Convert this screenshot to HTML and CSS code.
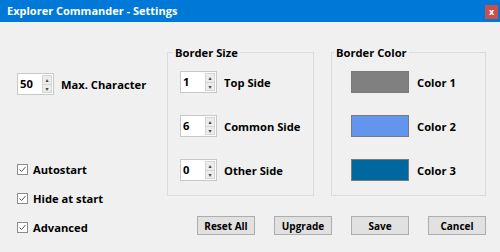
FILE: index.html
```html
<!DOCTYPE html>
<html lang="en">
<head>
    <meta charset="UTF-8">
    <meta name="viewport" content="width=device-width, initial-scale=1.0">
    <title>Explorer Commander - Settings</title>
    <link rel="stylesheet" href="styles.css">
</head>
<body>
<div class="window">
    <div class="title-bar">
        <span class="title-text">Explorer Commander - Settings</span>
        <span class="close-button">x</span>
    </div>

    <div class="content">
        <div class="left-column">
            <div class="row">
                <div class="spinbox">
                    <span class="spin-value">50</span>
                    <span class="spin-arrows"><span class="arrow">&#9652;</span><span class="arrow">&#9662;</span></span>
                </div>
                <span class="label">Max. Character</span>
            </div>

            <div class="checks">
                <label class="check"><span class="check-box"><svg width="11" height="11" viewBox="0 0 11 11"><rect x="0.5" y="0.5" width="10" height="10" fill="#fff" stroke="#8c8c8c"/><polyline points="2.5,5.5 4.5,7.5 8.5,3" fill="none" stroke="#555" stroke-width="1"/></svg></span>Autostart</label>
                <label class="check"><span class="check-box"><svg width="11" height="11" viewBox="0 0 11 11"><rect x="0.5" y="0.5" width="10" height="10" fill="#fff" stroke="#8c8c8c"/><polyline points="2.5,5.5 4.5,7.5 8.5,3" fill="none" stroke="#555" stroke-width="1"/></svg></span>Hide at start</label>
                <label class="check"><span class="check-box"><svg width="11" height="11" viewBox="0 0 11 11"><rect x="0.5" y="0.5" width="10" height="10" fill="#fff" stroke="#8c8c8c"/><polyline points="2.5,5.5 4.5,7.5 8.5,3" fill="none" stroke="#555" stroke-width="1"/></svg></span>Advanced</label>
            </div>
        </div>

        <div class="right-column">
            <div class="groups">
                <fieldset class="group group-size">
                    <legend>Border Size</legend>
                    <div class="row">
                        <div class="spinbox">
                            <span class="spin-value">1</span>
                            <span class="spin-arrows"><span class="arrow">&#9652;</span><span class="arrow">&#9662;</span></span>
                        </div>
                        <span class="label">Top Side</span>
                    </div>
                    <div class="row">
                        <div class="spinbox">
                            <span class="spin-value">6</span>
                            <span class="spin-arrows"><span class="arrow">&#9652;</span><span class="arrow">&#9662;</span></span>
                        </div>
                        <span class="label">Common Side</span>
                    </div>
                    <div class="row">
                        <div class="spinbox">
                            <span class="spin-value">0</span>
                            <span class="spin-arrows"><span class="arrow">&#9652;</span><span class="arrow">&#9662;</span></span>
                        </div>
                        <span class="label">Other Side</span>
                    </div>
                </fieldset>

                <fieldset class="group group-color">
                    <legend>Border Color</legend>
                    <div class="row">
                        <span class="swatch swatch-gray"></span>
                        <span class="label">Color 1</span>
                    </div>
                    <div class="row">
                        <span class="swatch swatch-blue"></span>
                        <span class="label">Color 2</span>
                    </div>
                    <div class="row">
                        <span class="swatch swatch-teal"></span>
                        <span class="label">Color 3</span>
                    </div>
                </fieldset>
            </div>

            <div class="buttons">
                <button class="btn">Reset All</button>
                <button class="btn">Upgrade</button>
                <button class="btn">Save</button>
                <button class="btn">Cancel</button>
            </div>
        </div>
    </div>
</div>
</body>
</html>
```

FILE: styles.css
```css
body {
    margin: 0;
    padding: 0;
    background-color: #f0f0f0;
    font-family: "Open Sans", "Noto Sans", sans-serif;
    font-weight: bold;
    color: #000000;
}

.window {
    width: 500px;
    height: 252px;
    overflow: hidden;
}

.title-bar {
    height: 22px;
    background-color: #0078d7;
    display: flex;
    align-items: center;
    justify-content: space-between;
    padding: 0 2px 0 7px;
}

.title-text {
    color: #FFFFFF;
    font-size: 11px;
    font-weight: bold;
    margin-top: -1px;
}

.close-button {
    width: 13px;
    height: 14px;
    background-color: #c9504c;
    color: #FFFFFF;
    font-size: 9px;
    line-height: 13px;
    text-align: center;
    margin-top: 1px;
}

.content {
    display: flex;
    padding: 23px 0 0 17px;
}

.left-column {
    width: 150px;
    padding-top: 28px;
}

.row {
    display: flex;
    align-items: center;
    height: 22px;
}

.label {
    font-size: 11.2px;
    margin-left: 7px;
}

.spinbox {
    width: 35px;
    height: 20px;
    background-color: #FFFFFF;
    border: 1px solid #c8c8c8;
    display: flex;
    align-items: stretch;
}

.spin-value {
    flex: 1;
    font-size: 11.2px;
    line-height: 20px;
    padding-left: 2px;
}

.spin-arrows {
    width: 10px;
    margin: 1px 1px 1px 0;
    display: flex;
    flex-direction: column;
}

.arrow {
    flex: 1;
    background-color: #ececec;
    border: 1px solid #d4d4d4;
    font-size: 6px;
    line-height: 7px;
    color: #444444;
    text-align: center;
    font-family: "DejaVu Sans", sans-serif;
}

.arrow + .arrow {
    border-top: none;
}

.checks {
    display: flex;
    flex-direction: column;
    gap: 13px;
    margin-top: 66px;
}

.check {
    display: flex;
    align-items: center;
    font-size: 11.2px;
    height: 16px;
}

.check-box {
    display: flex;
    margin-right: 5px;
}

.right-column {
    display: flex;
    flex-direction: column;
}

.groups {
    display: flex;
    gap: 17px;
}

.group {
    margin: 0;
    padding: 11px 0 14px 0;
    border: 1px solid #dcdcdc;
    display: flex;
    flex-direction: column;
    gap: 22px;
}

.group legend {
    font-size: 11.2px;
    padding: 0 2px;
}

.group-size {
    width: 140px;
    padding-left: 5px;
}

.group-size .row {
    margin-left: 7px;
}

.group-color {
    width: 151px;
    padding-left: 2px;
}

.group-color .row {
    margin-left: 17px;
}

.swatch {
    width: 56px;
    height: 20px;
    border: 1px solid #7a7a7a;
}

.swatch + .label {
    margin-left: 8px;
}

.swatch-gray {
    background-color: #808080;
}

.swatch-blue {
    background-color: #6495ed;
}

.swatch-teal {
    background-color: #00689f;
}

.buttons {
    display: flex;
    justify-content: flex-end;
    gap: 19px;
    margin-top: 20px;
}

.btn {
    width: 58px;
    height: 19px;
    padding: 0;
    background-color: #e1e1e1;
    border: 1px solid #adadad;
    font-family: inherit;
    font-weight: bold;
    font-size: 10px;
    color: #000000;
}
```
